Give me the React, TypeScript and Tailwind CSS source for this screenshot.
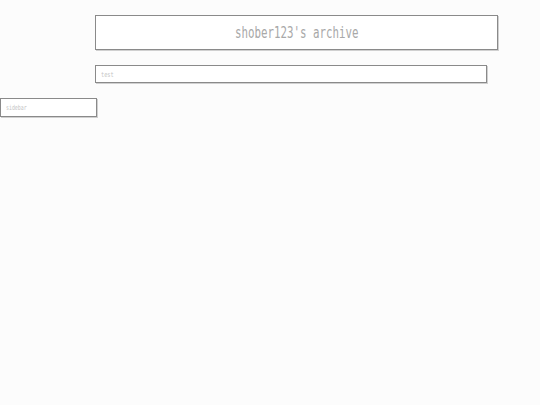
export default function App() {
  return (
    <div className="min-h-[405px] w-[540px] bg-[#fcfcfc] pt-[15px]" style={{ fontFamily: '"DejaVu Sans Mono", monospace' }}>
      {/* header */}
      <div className="ml-[95px] flex h-[35px] w-[403px] items-center justify-center border border-[#8a8a8a] bg-white pt-[2px] shadow-[1px_1px_0_#d0d0d0]">
        <span className="inline-block scale-x-[0.72] text-[15px] text-[#a8a8a8]">shober123's archive</span>
      </div>

      {/* search */}
      <div className="ml-[95px] mt-[15px] flex h-[18px] w-[392px] items-center border border-[#8a8a8a] bg-white pl-[5px] pt-[2px] shadow-[1px_1px_0_#d0d0d0]">
        <span className="inline-block origin-left scale-x-[0.75] text-[7px] text-[#c4c4c4]">test</span>
      </div>

      {/* sidebar */}
      <div className="mt-[15px] flex h-[19px] w-[97px] items-center border border-[#8a8a8a] bg-white pl-[5px] pt-[2px] shadow-[1px_1px_0_#d0d0d0]">
        <span className="inline-block origin-left scale-x-[0.7] text-[7px] text-[#c4c4c4]">sidebar</span>
      </div>
    </div>
  );
}
